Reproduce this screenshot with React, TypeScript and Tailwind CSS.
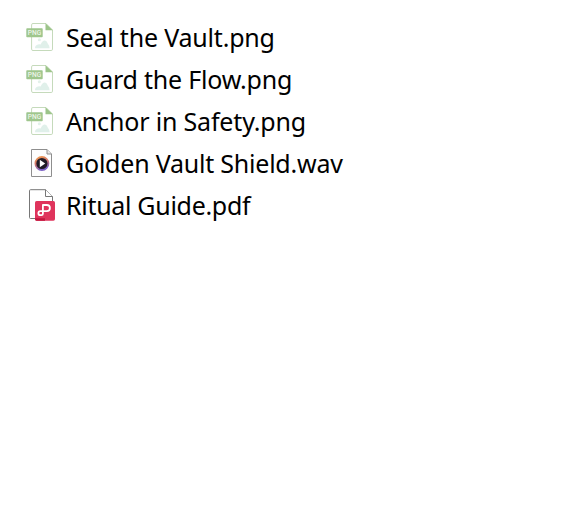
type FileKind = "png" | "wav" | "pdf";

interface FileEntry {
  name: string;
  kind: FileKind;
  tracking: string;
}

const files: FileEntry[] = [
  { name: "Seal the Vault.png", kind: "png", tracking: "tracking-[-0.19px]" },
  { name: "Guard the Flow.png", kind: "png", tracking: "tracking-[-0.22px]" },
  { name: "Anchor in Safety.png", kind: "png", tracking: "tracking-[-0.17px]" },
  { name: "Golden Vault Shield.wav", kind: "wav", tracking: "tracking-[-0.22px]" },
  { name: "Ritual Guide.pdf", kind: "pdf", tracking: "tracking-[-0.3px]" },
];

function PngIcon() {
  return (
    <svg className="h-[34px] w-8 shrink-0" viewBox="0 0 32 34">
      <path
        d="M8 2.5H21L27.5 9V28.2Q27.5 29.5 26.2 29.5H8Q6.6 29.5 6.6 28.2V3.8Q6.6 2.5 8 2.5Z"
        fill="#fff"
        stroke="#c5dabb"
        strokeWidth="1"
      />
      <path d="M20.5 2.2L27.8 9.2H20.5Z" fill="#9cc489" />
      <circle cx="14.3" cy="18.8" r="1.5" fill="#e3f1ea" />
      <path
        d="M10 27.2Q10 24.2 13 23.6Q14.4 22.8 15.6 23.6Q17.6 19.2 20 19.6Q22 20 23 23Q24.6 24.5 24.6 27.2Z"
        fill="#e0f0ea"
      />
      <rect x="1.3" y="7.3" width="16.4" height="9" rx="0.8" fill="#9fc68d" />
      <text
        x="9.5"
        y="14.4"
        textAnchor="middle"
        textLength="13.4"
        lengthAdjust="spacingAndGlyphs"
        fontFamily="Roboto, sans-serif"
        fontSize="7.2"
        fontWeight="500"
        fill="#edf5e9"
      >
        PNG
      </text>
    </svg>
  );
}

function WavIcon() {
  return (
    <svg className="h-[34px] w-8 shrink-0" viewBox="0 0 32 34">
      <defs>
        <linearGradient id="ring" x1="0" y1="0" x2="0.35" y2="1">
          <stop offset="0" stopColor="#f09a4c" />
          <stop offset="0.5" stopColor="#d2776e" />
          <stop offset="1" stopColor="#7c62c4" />
        </linearGradient>
      </defs>
      <path d="M6.5 2.5H22L26.5 7V29.5H6.5Z" fill="#fdfdfd" stroke="#8e8e8e" />
      <path d="M22 2.5V7H26.5" fill="#e6e6e6" stroke="#8e8e8e" />
      <circle cx="16.9" cy="16.5" r="6.5" fill="#211b26" stroke="url(#ring)" strokeWidth="1.8" />
      <path d="M14.8 12.8L20.2 16.5L14.8 20.2Z" fill="#fff" />
    </svg>
  );
}

function PdfIcon() {
  return (
    <svg className="h-[34px] w-8 shrink-0" viewBox="0 0 32 34">
      <path
        d="M5.5 0.7H20.5L27.5 7.5V29.5H5.5Q4.5 29.5 4.5 28.5V1.7Q4.5 0.7 5.5 0.7Z"
        fill="#fff"
        stroke="#777"
      />
      <path d="M20.5 0.7V7.5H27.5" fill="#fff" stroke="#777" />
      <rect x="10" y="12" width="20" height="19.7" rx="1.6" fill="#df345c" />
      <path d="M10 29.3H20V31.7H11.6Q10 31.7 10 30.1Z" fill="#c4163e" />
      <path
        d="M17.9 16H21.8A3.1 3.1 0 0 1 21.8 22.2H15.4A2 2 0 0 0 15.4 26.2H16.4Q17.9 26.2 17.9 24.7V15.2"
        fill="none"
        stroke="#fff"
        strokeWidth="1.8"
      />
    </svg>
  );
}

const icons = { png: PngIcon, wav: WavIcon, pdf: PdfIcon };

export default function App() {
  return (
    <div className="h-[523px] bg-white pt-[17px] pl-[25px]">
      <ul className="flex flex-col">
        {files.map((file) => {
          const Icon = icons[file.kind];
          return (
            <li key={file.name} className="flex h-[42px] items-center gap-[9px]">
              <Icon />
              <span
                className={`pb-0.5 font-['Noto_Sans',sans-serif] text-[25px] leading-10 whitespace-nowrap text-black ${file.tracking}`}
              >
                {file.name}
              </span>
            </li>
          );
        })}
      </ul>
    </div>
  );
}
